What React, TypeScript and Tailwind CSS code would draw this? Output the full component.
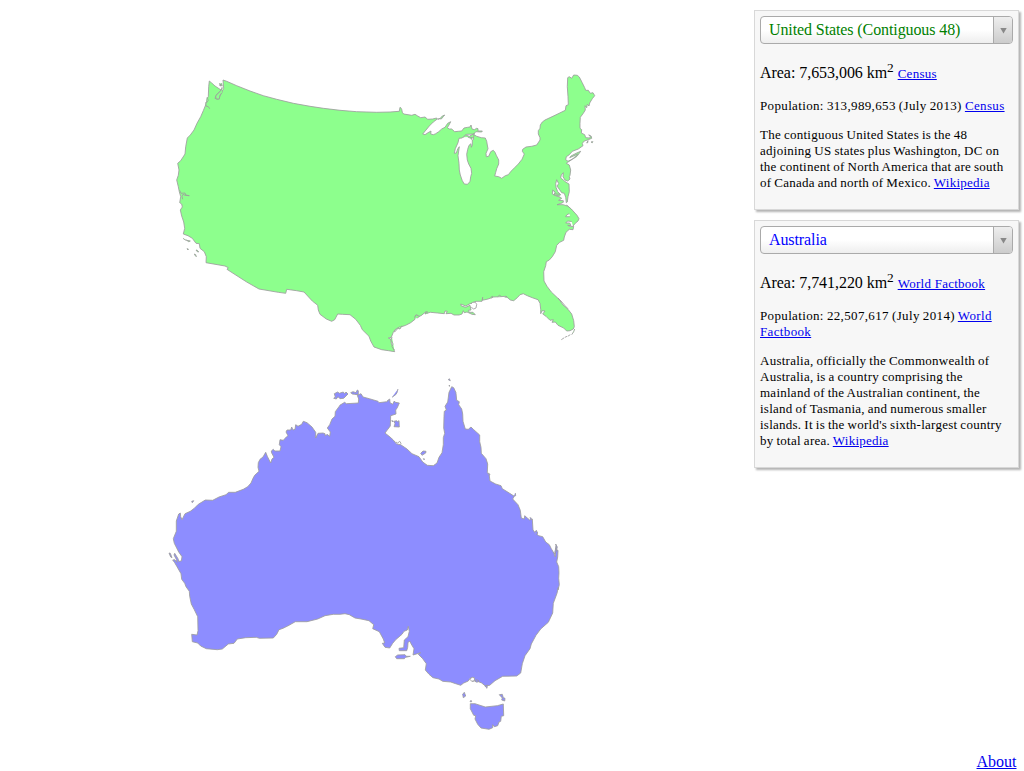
import type { ReactNode } from "react";

// Each run of points is recorded on a local grid: origin x, origin y, then
// points at three grid units per map pixel.
type Run = [number, number, string];

const outline = (runs: Run[], closed = true) => {
  const pts = runs.flatMap(([ox, oy, s]) =>
    s
      .trim()
      .split(/\s+/)
      .map((p) => {
        const [x, y] = p.split(",").map(Number);
        return `${(ox + x / 3).toFixed(1)},${(oy + y / 3).toFixed(1)}`;
      })
  );
  return `M${pts.join("L")}${closed ? "Z" : ""}`;
};

const usMainland = outline([
  [160, 60, "148,63 155,69 165,78 174,84 183,90 187,93 191,85 189,60 200,64 230,77 270,93 310,107 350,118 400,130 450,139"],
  [310, 90, "0,49 40,55 90,61 140,65 200,67 240,66 268,64 270,52"],
  [400, 60, "2,143 5,148 7,157 11,162 35,166 45,163 53,168 62,173 75,171 83,178 98,177 110,174 112,177 100,186 88,198 78,210 68,222 75,224 84,218 93,213 92,222 100,224 107,221 116,215 125,207 135,202 143,190 152,185 147,195 142,203 148,207 155,207 164,215 175,214 185,213 192,204 203,202 210,201 213,195 216,207 223,209 230,205 234,206 234,213 247,213 245,216 227,215 222,222 200,223 186,234 177,235 174,248 166,266 163,280 169,279 173,267 178,260 174,287 177,310 178,330 181,345 187,362 193,372 202,373 210,365 212,350 215,340 213,325 206,312 202,300 200,283 203,268 207,256 213,251 214,262 217,255 217,240 221,238 220,229 222,224 230,229 244,233 256,234 260,244 262,255 264,266 258,280 259,290 266,289 272,275 280,271 285,277 289,286 296,300 296,312 290,326 287,337 284,348 296,350 305,355 316,347 325,344 333,334 345,322 355,312 366,298 373,282 367,274 368,268 378,261 395,259 410,255 420,240 420,233 415,222 415,212 420,205 421,195 427,186 435,180 465,166 496,151 498,137 505,134 504,110 502,80 503,53 508,50 515,55 521,45 532,46 538,51 546,67 554,83 557,91 565,91 571,100 579,98 584,107 577,116 569,129 567,138 562,133 560,143 555,137 556,150 550,160 541,172 540,190 540,205 545,209 544,219 554,224 557,233 570,234 571,227 566,225 574,229 575,235 565,239 553,243 547,250 549,257 535,267 517,274 508,284 499,290 497,299 504,304 520,296 531,289 542,274 530,279 513,288 509,293 525,286 533,282 518,297 503,307 499,310 508,315 512,330 510,346 508,350 510,357 503,363 495,360 489,350 490,338 484,345 482,354 490,360 498,367 507,372 508,395 504,410 502,426 499,428 497,412 493,400 485,398 478,388 471,378 476,371 470,359 467,371 468,382 473,395 482,404 478,408 461,404 466,397 458,390 457,402 467,407 481,412 485,415 476,421 490,422 490,427 481,431 471,434 490,434 499,437 510,444 516,450"],
  [400, 180, "500,76 511,87 520,96 523,102 509,100 500,105 497,110 508,110 520,104 528,110 527,120 518,125 503,123 497,129 509,129 513,137 503,136 512,140 521,139 519,149 508,148 498,157 493,171 491,181 479,187 470,196 466,215 457,230 448,240 439,245 437,257 431,275 432,303 441,319 454,336 477,358 489,375 504,388 515,402 521,422 523,440 520,447 510,452 500,453 491,444 474,436 466,426 456,427 460,419 450,421 438,409 428,402 435,393 426,392 422,401 422,388 420,370 414,359 397,353 382,347 370,341 360,344 352,353 341,362 331,360 318,349 300,350 281,351 264,357 247,361 248,352 246,364 228,364 210,371 197,378 182,372 184,378 197,382 210,376 213,390 205,391 208,397 219,397 226,404 216,403 201,396 193,398 190,392 186,402 177,405 162,405 153,400 138,401 142,394 135,393 133,401 113,399 91,397 75,402 78,395 63,407 49,412 53,406 46,407 45,418 32,428 17,436 2,441"],
  [230, 250, "508,231 495,239 490,247 484,262 475,264 483,268 484,280 494,305 476,302 455,299 432,291 422,273 417,259 397,239 391,226 377,208 360,194 337,193 323,192 314,209 305,214 289,207 270,193 265,180 263,166 247,153 222,126 200,122 170,118 167,130 145,127 87,117 50,96 0,64"],
  [160, 60, "201,628 205,623 195,618 138,608 139,590 133,575 120,565 118,551 108,550 97,535 84,527 70,522 74,505 71,486 65,468 61,450 67,441 65,432 59,428 62,410 58,395 55,380 50,360 55,346 57,330 53,310 62,302 75,282 77,260 82,234 91,225 102,210 111,190 122,170 130,152 139,130 141,115 145,110 146,80"],
]);

const usDetails = [
  outline([[400, 60, "113,178 119,176 124,177 130,170 134,165 127,168 121,175"]]),
  outline([[400, 60, "190,232 197,225 208,229 222,221 221,230 215,236 203,231"]], false),
  outline([[160, 60, "188,76 181,78 184,69"]], false),
  outline([[160, 60, "187,80 183,92 170,103 165,115 175,118 181,106 187,96 184,88 178,101 169,110 177,114"]], false),
  outline([[160, 60, "187,84 181,94 174,100 167,108 168,117 178,117 180,105 185,99"]], false),
  outline([[160, 60, "178,70 183,76 178,75 187,72"]], false),
  outline([[160, 60, "137,127 138,138 145,140 149,146"]], false),
  outline([[160, 60, "141,112 145,121 140,128"]], false),
  outline([[160, 60, "59,391 63,400 75,399 77,405 88,407 75,406 69,403 66,409 68,418"]], false),
  outline([[160, 60, "69,535 76,540 81,541"]], false),
  outline([[160, 60, "80,541 91,543 86,545"]]),
  outline([[160, 60, "81,566 85,567 84,570"]]),
  outline([[160, 60, "108,570 112,571 116,576 112,575"]]),
  outline([[160, 60, "103,582 107,584 109,590 106,587"]]),
  outline([[400, 60, "560,249 564,242 563,248"]]),
  outline([[400, 60, "573,246 579,245 577,248"]]),
  outline([[400, 180, "500,76 514,87 531,106 537,116 534,123 526,130 519,138"]], false),
  outline([[400, 180, "474,354 483,363 495,377 504,386"]], false),
  outline([[400, 180, "524,447 521,455 515,464"]], false),
  outline([[400, 180, "511,464 503,469"]], false),
  outline([[400, 180, "501,469 495,472"]], false),
  outline([[400, 180, "493,473 484,479"]], false),
  outline([[400, 180, "272,352 278,349 275,355"]], false),
  outline([[400, 180, "293,350 298,346 304,349"]], false),
  outline([[400, 180, "315,353 319,348 321,353"]], false),
  outline([[230, 250, "515,227 510,237 503,235 498,242 492,246"]], false),
  outline([[230, 250, "486,261 483,270 489,282 486,290 493,300"]], false),
  outline([[230, 250, "554,203 558,194 568,199 562,205"]], false),
  outline([[230, 250, "586,192 591,184 592,190"]], false),
  outline([[400, 60, "461,392 469,402 480,403"]], false),
  outline([[400, 60, "210,232 216,233 214,239"]], false),
];

const usInlets = outline([[400, 180, "213,372 218,367 226,367 230,373 228,384 221,387 214,382"]], false);

const ausMainland = outline([
  [160, 370, "75,431 91,424 103,415 115,403 136,390 158,391 177,381 198,374 206,367 226,367 250,358 263,350 273,339 279,325 284,316 297,304 294,292 295,278 300,268 309,261 317,247 322,259 332,279 336,267 342,262 335,249 334,243 340,238 344,243 360,243 363,230 358,224 360,209 370,211 379,201 384,197 378,186 381,180 392,180 395,171 399,180 405,178 407,164 414,169 425,163 430,154 441,158 456,171 467,187 467,204 474,190 489,189 495,191 496,198 501,193 509,199 511,186 502,174 509,164 516,147 525,139 526,125 539,107"],
  [310, 370, "89,106 104,97 109,101 145,99 146,87 142,76 153,71 159,81 178,86 204,94 207,98 216,97 230,95 239,87 240,98 248,103 253,93 256,97 268,99 262,113 257,120 258,132 242,137 241,168 225,189 240,201 250,210 259,221 272,224 291,237 306,251 327,260 338,276 352,286 370,287 381,279 387,262 396,248 400,224 400,203 404,190 401,174 402,139 403,124 409,120 405,109 413,96 417,67 425,50 431,53 438,68"],
  [430, 370, "78,70 80,91 88,95 86,104 95,117 98,132 99,154 106,177 115,178 123,171 130,178 138,185 149,195 149,215 153,232 154,250 168,266 173,282 172,307 178,317 180,333 197,342 213,347 217,356 239,370 253,379 248,387 264,404 271,421 274,444 283,447 284,437 292,444 299,450 307,447 309,480 317,490 326,497 338,500 347,516 358,524 364,536 372,550"],
  [480, 510, "222,130 225,140 229,108 226,118 234,121 233,141 230,156 236,170 237,188 236,205 238,224 234,240"],
  [340, 580, "655,22 651,40 640,70 638,99 625,127 602,147 588,166 574,192 570,206 555,227 547,251 542,279 530,288 488,289 465,302 449,316 436,318 425,309 408,302 397,304 393,300 401,293 390,295 385,303 371,309 362,316 347,311 332,306 308,304 297,297 279,293 267,283 256,270 259,251 248,236 235,223 242,218 219,225 222,206 213,191 209,183 204,188 203,202 200,212 178,212 177,205 191,203 193,180 204,170 208,154 205,139 202,150 192,154 186,163 167,179 158,190 149,204 135,202 127,190 134,189 130,177 118,155 98,146 101,134 87,122 63,117 45,114 28,104 15,101 0,103"],
  [160, 500, "540,343 520,343 495,347 473,357 441,365 406,365 387,376 369,385 357,389 350,403 340,414 298,415 289,412 257,413 232,417 222,430 205,432 187,447 172,449 139,446 122,438 113,429 97,425 95,403 111,405 114,392 113,350 103,329 94,312 89,289 88,274 78,260 74,250 65,238 63,221 51,200 44,188 38,180 44,179 51,187 49,178 42,165 44,160 54,176 56,184 64,183 66,170 56,156 43,130 40,116 49,94 49,63 56,42 61,39 62,50 66,59 75,41"],
]);

const ausIslands = [
  outline([[340, 580, "391,371 405,371 436,381 472,377 490,372 491,407 484,409 482,424 477,426 473,437 463,440 458,434 458,443 447,448 423,444 413,433 405,417 407,407 401,406 391,386"]]),
  outline([[340, 580, "368,343 373,337 377,348 370,353"]]),
  outline([[340, 580, "478,344 487,343 490,353 495,355 494,363 485,360 487,354"]]),
  outline([[340, 580, "166,230 173,225 195,224 199,229 211,229 197,232 193,236 170,236"]]),
  outline([[340, 580, "405,304 410,299 417,303 411,307"]]),
  outline([[340, 580, "435,318 442,315 441,325 437,321"]]),
  outline([[340, 580, "390,365 393,361 395,365"]]),
  outline([[310, 370, "71,85 76,81 73,71 83,66 88,70 100,66 104,71 108,66 114,72 101,85 90,86 84,80 79,87"]]),
  outline([[310, 370, "122,68 129,65 138,68 142,60 145,62 145,74 133,73 127,72"]]),
  outline([[310, 370, "252,154 260,152 262,155 267,152 268,171 252,170 255,161"]]),
  outline([[310, 370, "245,152 250,153 248,156"]]),
  outline([[310, 370, "332,250 339,243 348,244 347,249 336,256"]]),
  outline([[310, 370, "340,266 344,267 342,269"]]),
  outline([[310, 370, "415,29 421,32 418,26"]]),
  outline([[310, 370, "417,46 420,47 418,49"]]),
  outline([[310, 370, "246,82 257,74 261,68 264,57"]], false),
  outline([[310, 370, "231,94 236,89"]], false),
  outline([[160, 370, "95,394 101,392 97,398"]]),
  outline([[160, 500, "27,159 31,160 36,173 32,171"]]),
  outline([[430, 370, "251,378 257,377 256,369"]], false),
  outline([[430, 370, "174,309 180,313 178,317"]], false),
  outline([[430, 370, "315,487 319,481 323,489 320,494"]], false),
  outline([[430, 370, "299,443 304,444 302,449"]], false),
  outline([[430, 370, "377,522 382,531 379,543 374,552 375,543 379,534"]]),
];

const ausInlets = [
  outline([[340, 580, "389,297 397,292 404,294 403,302 395,304"]]),
  outline([[310, 370, "257,216 263,219 269,214 273,220 270,224 262,222"]], false),
];

function Shape({ parts, fill }: { parts: string[]; fill: string }) {
  return (
    <g fill={fill} stroke="#9d9d9d" strokeWidth="0.85" strokeLinejoin="round">
      {parts.map((d, i) => (
        <path key={i} d={d} />
      ))}
    </g>
  );
}

function Link({ children }: { children: ReactNode }) {
  return (
    <a href="#" className="text-[#0000ee] underline">
      {children}
    </a>
  );
}

interface PanelProps {
  name: string;
  tone: string;
  height: string;
  area: string;
  areaSource: string;
  population: ReactNode;
  children: ReactNode;
}

function Panel({ name, tone, height, area, areaSource, population, children }: PanelProps) {
  return (
    <section
      className={`w-[265px] border border-[#d8d8d8] bg-[#f7f7f7] p-[5px] shadow-[2px_2px_2px_rgba(0,0,0,0.3)] ${height}`}
    >
      <button
        type="button"
        className="flex h-7 w-[253px] overflow-hidden rounded-[4px] border border-[#aaaaaa] bg-gradient-to-b from-white from-50% to-[#eeeeee] text-left"
      >
        <span className={`flex-1 pl-2 text-base leading-[26px] tracking-[-0.1px] ${tone}`}>{name}</span>
        <span className="flex w-[19px] items-center justify-center border-l border-[#aaaaaa] bg-gradient-to-b from-[#eeeeee] to-[#cccccc]">
          <svg width="7" height="6" viewBox="0 0 7 6" className="mt-px">
            <path d="M0.3 0H6.7L3.5 5.6Z" fill="#888888" />
          </svg>
        </span>
      </button>
      <p className="mt-[19px] h-5 whitespace-nowrap text-base leading-5 tracking-[-0.05px]">
        Area: {area} km<sup className="top-[-0.45em] text-[13.33px] leading-none">2</sup>{" "}
        <span className="text-[13px] tracking-[0.26px]">
          <Link>{areaSource}</Link>
        </span>
      </p>
      <p className="mt-[15px] whitespace-nowrap text-[13px] leading-4 tracking-[0.35px] [word-spacing:-0.5px]">
        {population}
      </p>
      <p className="mt-[13px] whitespace-nowrap text-[13px] leading-4 tracking-[0.25px] [font-variant-ligatures:common-ligatures] [word-spacing:-0.5px]">
        {children}
      </p>
    </section>
  );
}

export default function App() {
  return (
    <div className="flex h-[771px] w-[1024px] overflow-hidden bg-white font-['Liberation_Serif',serif] text-black">
      <svg width="754" height="771" viewBox="0 0 754 771" className="shrink-0">
        <Shape parts={[usMainland, ...usDetails]} fill="#8dff8d" />
        <Shape parts={[usInlets]} fill="#ffffff" />
        <Shape parts={[ausMainland, ...ausIslands]} fill="#8d8dff" />
        <Shape parts={ausInlets} fill="#ffffff" />
      </svg>
      <aside className="flex w-[270px] flex-col pt-[10px]">
        <div className="flex flex-col gap-[10px]">
          <Panel
            name="United States (Contiguous 48)"
            tone="text-[#008000]"
            height="h-[200px]"
            area="7,653,006"
            areaSource="Census"
            population={
              <>
                Population: 313,989,653 (July 2013) <Link>Census</Link>
              </>
            }
          >
            The contiguous United States is the 48
            <br />
            adjoining US states plus Washington, DC on
            <br />
            the continent of North America that are south
            <br />
            of Canada and north of Mexico. <Link>Wikipedia</Link>
          </Panel>
          <Panel
            name="Australia"
            tone="text-[#0000ff]"
            height="h-[248px]"
            area="7,741,220"
            areaSource="World Factbook"
            population={
              <>
                Population: 22,507,617 (July 2014){" "}
                <Link>
                  World
                  <br />
                  Factbook
                </Link>
              </>
            }
          >
            Australia, officially the Commonwealth of
            <br />
            Australia, is a country comprising the
            <br />
            mainland of the Australian continent, the
            <br />
            island of Tasmania, and numerous smaller
            <br />
            islands. It is the world's sixth-largest country
            <br />
            by total area. <Link>Wikipedia</Link>
          </Panel>
        </div>
        <div className="mt-auto pr-[7.5px] text-right text-base leading-[18px]">
          <Link>About</Link>
        </div>
      </aside>
    </div>
  );
}
